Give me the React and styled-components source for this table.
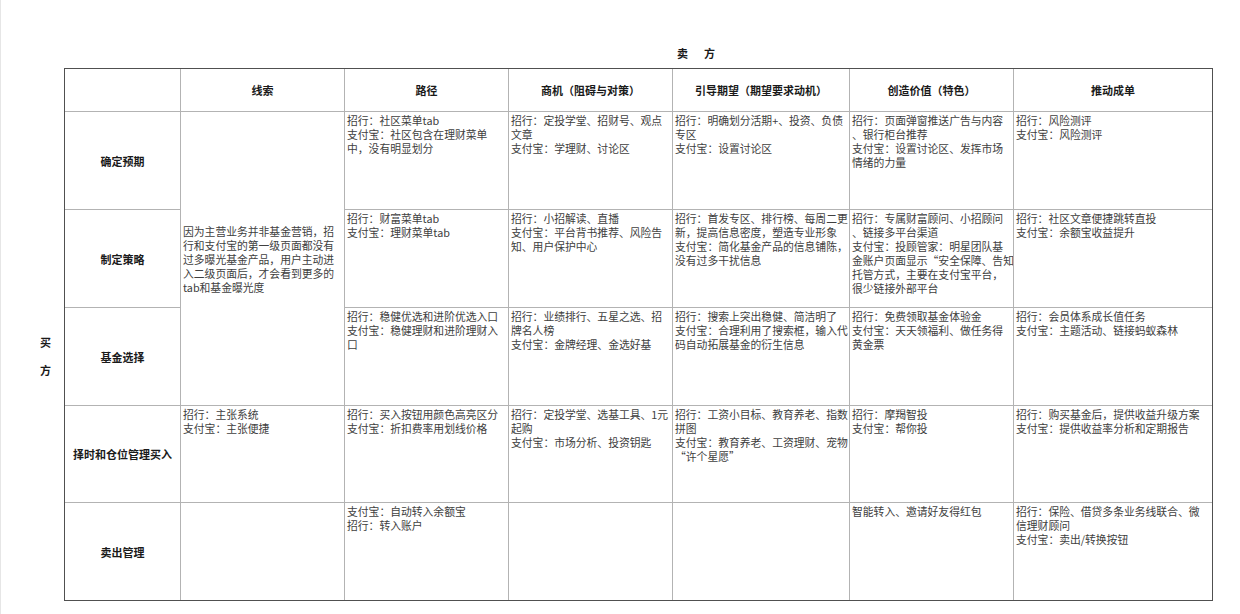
import React from "react";
import styled, { createGlobalStyle } from "styled-components";

const GlobalStyle = createGlobalStyle`
  html, body {
    margin: 0;
    padding: 0;
    background: #fff;
  }
  body {
    font-family: "Noto Sans CJK SC", "Noto Sans", sans-serif;
    color: #333;
  }
`;

const Page = styled.div`
  display: grid;
  grid-template-columns: 64px 1148px;
  grid-template-rows: auto auto;
  align-content: start;
  width: 1240px;
  height: 614px;
  box-sizing: border-box;
  padding-top: 46px;
  box-shadow: inset 1px 0 0 #e6e6e6;
`;

const Title = styled.div`
  grid-column: 2;
  display: flex;
  justify-content: center;
  gap: 16px;
  padding-left: 116px;
  height: 14px;
  margin-bottom: 8px;
  font-size: 11px;
  line-height: 14px;
  font-weight: 700;
  color: #1a1a1a;
`;

const Side = styled.div`
  grid-column: 1;
  grid-row: 2;
  display: flex;
  flex-direction: column;
  align-items: flex-end;
  justify-content: center;
  gap: 14px;
  padding: 43px 13px 0 0;
  font-size: 11px;
  line-height: 14px;
  font-weight: 700;
  color: #1a1a1a;
`;

const Sheet = styled.table`
  grid-column: 2;
  grid-row: 2;
  width: 1148px;
  table-layout: fixed;
  border-collapse: collapse;
  outline: 1px solid #505050;
  outline-offset: -1px;
`;

const Col = styled.col`
  width: ${(p) => p.$w}px;
`;

const Row = styled.tr`
  height: ${(p) => p.$h}px;
`;

const HeadCell = styled.th`
  border: 1px solid #b3b3b3;
  font-size: 11px;
  font-weight: 700;
  color: #1a1a1a;
  text-align: center;
  vertical-align: middle;
  padding: 0;
`;

const RowHead = styled.th`
  border: 1px solid #b3b3b3;
  font-size: 11px;
  font-weight: 700;
  color: #1a1a1a;
  text-align: center;
  vertical-align: middle;
  padding: 0;
  white-space: nowrap;
`;

const Cell = styled.td`
  border: 1px solid #b3b3b3;
  vertical-align: ${(p) => (p.$middle ? "middle" : "top")};
  padding: 1px 1px 0 2px;
  font-size: 10.8px;
  line-height: 14px;
  color: #404040;
  overflow: hidden;
`;

const Line = styled.div`
  white-space: nowrap;
`;

const widths = [116, 164, 164, 164, 177, 164, 199];

const heads = ["线索", "路径", "商机（阻碍与对策）", "引导期望（期望要求动机）", "创造价值（特色）", "推动成单"];

const clue = [
  "因为主营业务并非基金营销，招",
  "行和支付宝的第一级页面都没有",
  "过多曝光基金产品，用户主动进",
  "入二级页面后，才会看到更多的",
  "tab和基金曝光度",
];

const rows = [
  {
    label: "确定预期",
    h: 98,
    cells: [
      ["招行：社区菜单tab", "支付宝：社区包含在理财菜单", "中，没有明显划分"],
      ["招行：定投学堂、招财号、观点", "文章", "支付宝：学理财、讨论区"],
      ["招行：明确划分活期+、投资、负债", "专区", "支付宝：设置讨论区"],
      ["招行：页面弹窗推送广告与内容", "、银行柜台推荐", "支付宝：设置讨论区、发挥市场", "情绪的力量"],
      ["招行：风险测评", "支付宝：风险测评"],
    ],
  },
  {
    label: "制定策略",
    h: 98,
    cells: [
      ["招行：财富菜单tab", "支付宝：理财菜单tab"],
      ["招行：小招解读、直播", "支付宝：平台背书推荐、风险告", "知、用户保护中心"],
      ["招行：首发专区、排行榜、每周二更", "新，提高信息密度，塑造专业形象", "支付宝：简化基金产品的信息铺陈，", "没有过多干扰信息"],
      ["招行：专属财富顾问、小招顾问", "、链接多平台渠道", "支付宝：投顾管家：明星团队基", "金账户页面显示“安全保障、告知", "托管方式，主要在支付宝平台，", "很少链接外部平台"],
      ["招行：社区文章便捷跳转直投", "支付宝：余额宝收益提升"],
    ],
  },
  {
    label: "基金选择",
    h: 98,
    cells: [
      ["招行：稳健优选和进阶优选入口", "支付宝：稳健理财和进阶理财入", "口"],
      ["招行：业绩排行、五星之选、招", "牌名人榜", "支付宝：金牌经理、金选好基"],
      ["招行：搜索上突出稳健、简洁明了", "支付宝：合理利用了搜索框，输入代", "码自动拓展基金的衍生信息"],
      ["招行：免费领取基金体验金", "支付宝：天天领福利、做任务得", "黄金票"],
      ["招行：会员体系成长值任务", "支付宝：主题活动、链接蚂蚁森林"],
    ],
  },
  {
    label: "择时和仓位管理买入",
    h: 97,
    clue: ["招行：主张系统", "支付宝：主张便捷"],
    cells: [
      ["招行：买入按钮用颜色高亮区分", "支付宝：折扣费率用划线价格"],
      ["招行：定投学堂、选基工具、1元", "起购", "支付宝：市场分析、投资钥匙"],
      ["招行：工资小目标、教育养老、指数", "拼图", "支付宝：教育养老、工资理财、宠物", "“许个星愿”"],
      ["招行：摩羯智投", "支付宝：帮你投"],
      ["招行：购买基金后，提供收益升级方案", "支付宝：提供收益率分析和定期报告"],
    ],
  },
  {
    label: "卖出管理",
    h: 98,
    clue: [],
    cells: [
      ["支付宝：自动转入余额宝", "招行：转入账户"],
      [],
      [],
      ["智能转入、邀请好友得红包"],
      ["招行：保险、借贷多条业务线联合、微", "信理财顾问", "支付宝：卖出/转换按钮"],
    ],
  },
];

const Lines = ({ lines }) => lines.map((t, i) => <Line key={i}>{t}</Line>);

export default function App() {
  return (
    <>
      <GlobalStyle />
      <Page>
        <Title>
          <span>卖</span>
          <span>方</span>
        </Title>
        <Side>
          <span>买</span>
          <span>方</span>
        </Side>
        <Sheet>
          <colgroup>
            {widths.map((w, i) => (
              <Col key={i} $w={w} />
            ))}
          </colgroup>
          <thead>
            <Row $h={43}>
              <HeadCell />
              {heads.map((h) => (
                <HeadCell key={h}>{h}</HeadCell>
              ))}
            </Row>
          </thead>
          <tbody>
            {rows.map((r, i) => (
              <Row key={r.label} $h={r.h}>
                <RowHead>{r.label}</RowHead>
                {i === 0 && (
                  <Cell rowSpan={3} $middle>
                    <Lines lines={clue} />
                  </Cell>
                )}
                {r.clue && (
                  <Cell>
                    <Lines lines={r.clue} />
                  </Cell>
                )}
                {r.cells.map((c, j) => (
                  <Cell key={j}>
                    <Lines lines={c} />
                  </Cell>
                ))}
              </Row>
            ))}
          </tbody>
        </Sheet>
      </Page>
    </>
  );
}
